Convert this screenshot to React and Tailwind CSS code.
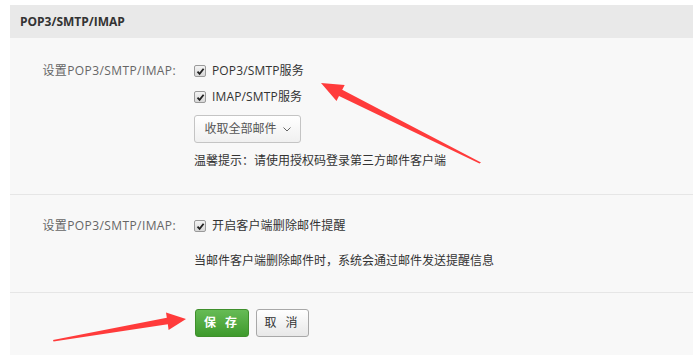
import { useState } from 'react'

const font = { fontFamily: '"Open Sans", "Noto Sans CJK SC", sans-serif' }

function Check({ checked, onChange, children }) {
  return (
    <label className="flex h-5 cursor-pointer items-center gap-[6px] text-[12px] text-[#333]" onClick={onChange}>
      <span className="flex h-[12px] w-[12px] items-center justify-center rounded-[2px] border border-[#9a9a9a] bg-gradient-to-b from-[#f4f4f4] to-[#d8d8d8]">
        {checked && (
          <svg width="9" height="9" viewBox="0 0 9 9">
            <path d="M1.5 4.6 L3.6 6.8 L7.6 1.8" fill="none" stroke="#222" strokeWidth="1.8" />
          </svg>
        )}
      </span>
      <span className="tracking-[0.15px]">{children}</span>
    </label>
  )
}

export default function App() {
  const [pop, setPop] = useState(true)
  const [imap, setImap] = useState(true)
  const [remind, setRemind] = useState(true)

  return (
    <div className="relative min-h-screen bg-white pl-[10px] pr-[2px] pt-[5px]" style={font}>
      <div className="bg-[#f8f8f8]">
        <div className="flex h-[33px] items-center bg-[#e9e9e9] pl-[10px] text-[12px] font-bold text-[#333]">
          POP3/SMTP/IMAP
        </div>

        <div className="flex border-b border-[#e6e6e6] pb-[23px] pt-[23px]">
          <div className="flex h-5 w-[166px] shrink-0 items-center justify-end text-[12px] tracking-[0.4px] text-[#666]">设置POP3/SMTP/IMAP:</div>
          <div className="ml-[18px] flex flex-col items-start">
            <Check checked={pop} onChange={() => setPop(!pop)}>POP3/SMTP服务</Check>
            <div className="mt-[6px]">
              <Check checked={imap} onChange={() => setImap(!imap)}>IMAP/SMTP服务</Check>
            </div>
            <button className="mt-[8px] flex h-[28px] w-[107px] items-center justify-center gap-[6px] rounded-[3px] border border-[#c4c4c4] bg-gradient-to-b from-white to-[#f0f0f0] text-[12px] text-[#555]">
              收取全部邮件
              <svg width="8" height="5" viewBox="0 0 8 5">
                <path d="M0.5 0.5 L4 4 L7.5 0.5" fill="none" stroke="#666" strokeWidth="1" />
              </svg>
            </button>
            <div className="mt-[8px] flex h-5 items-center text-[12px] text-[#333]">温馨提示：请使用授权码登录第三方邮件客户端</div>
          </div>
        </div>

        <div className="flex border-b border-[#e6e6e6] pb-[21px] pt-[21px]">
          <div className="flex h-5 w-[166px] shrink-0 items-center justify-end text-[12px] tracking-[0.4px] text-[#666]">设置POP3/SMTP/IMAP:</div>
          <div className="ml-[18px] flex flex-col items-start">
            <Check checked={remind} onChange={() => setRemind(!remind)}>开启客户端删除邮件提醒</Check>
            <div className="mt-[15px] flex h-5 items-center text-[12px] text-[#333]">当邮件客户端删除邮件时，系统会通过邮件发送提醒信息</div>
          </div>
        </div>

        <div className="flex gap-[7px] pb-[18px] pl-[185px] pt-[16px]">
          <button className="h-[28px] w-[54px] rounded-[3px] border border-[#3f8f2c] bg-gradient-to-b from-[#66bb55] to-[#3e9a2c] text-[12px] font-bold tracking-[3px] text-white">
            保 存
          </button>
          <button className="h-[28px] w-[53px] rounded-[3px] border border-[#a8a8a8] bg-gradient-to-b from-white to-[#e8e8e8] text-[12px] tracking-[3px] text-[#333]">
            取 消
          </button>
        </div>
      </div>

      <svg className="pointer-events-none absolute left-0 top-0" width="695" height="359">
        <polygon
          points="321,83 344.7,84.9 342.2,89.8 481,162.5 479.5,163.5 339,96 336.5,100.9"
          fill="#ff3b3b"
        />
        <polygon
          points="186,319 166,312.5 166.8,317.8 53,340 53.5,341.5 167.8,324.2 168.6,330"
          fill="#ff3b3b"
        />
      </svg>
    </div>
  )
}
